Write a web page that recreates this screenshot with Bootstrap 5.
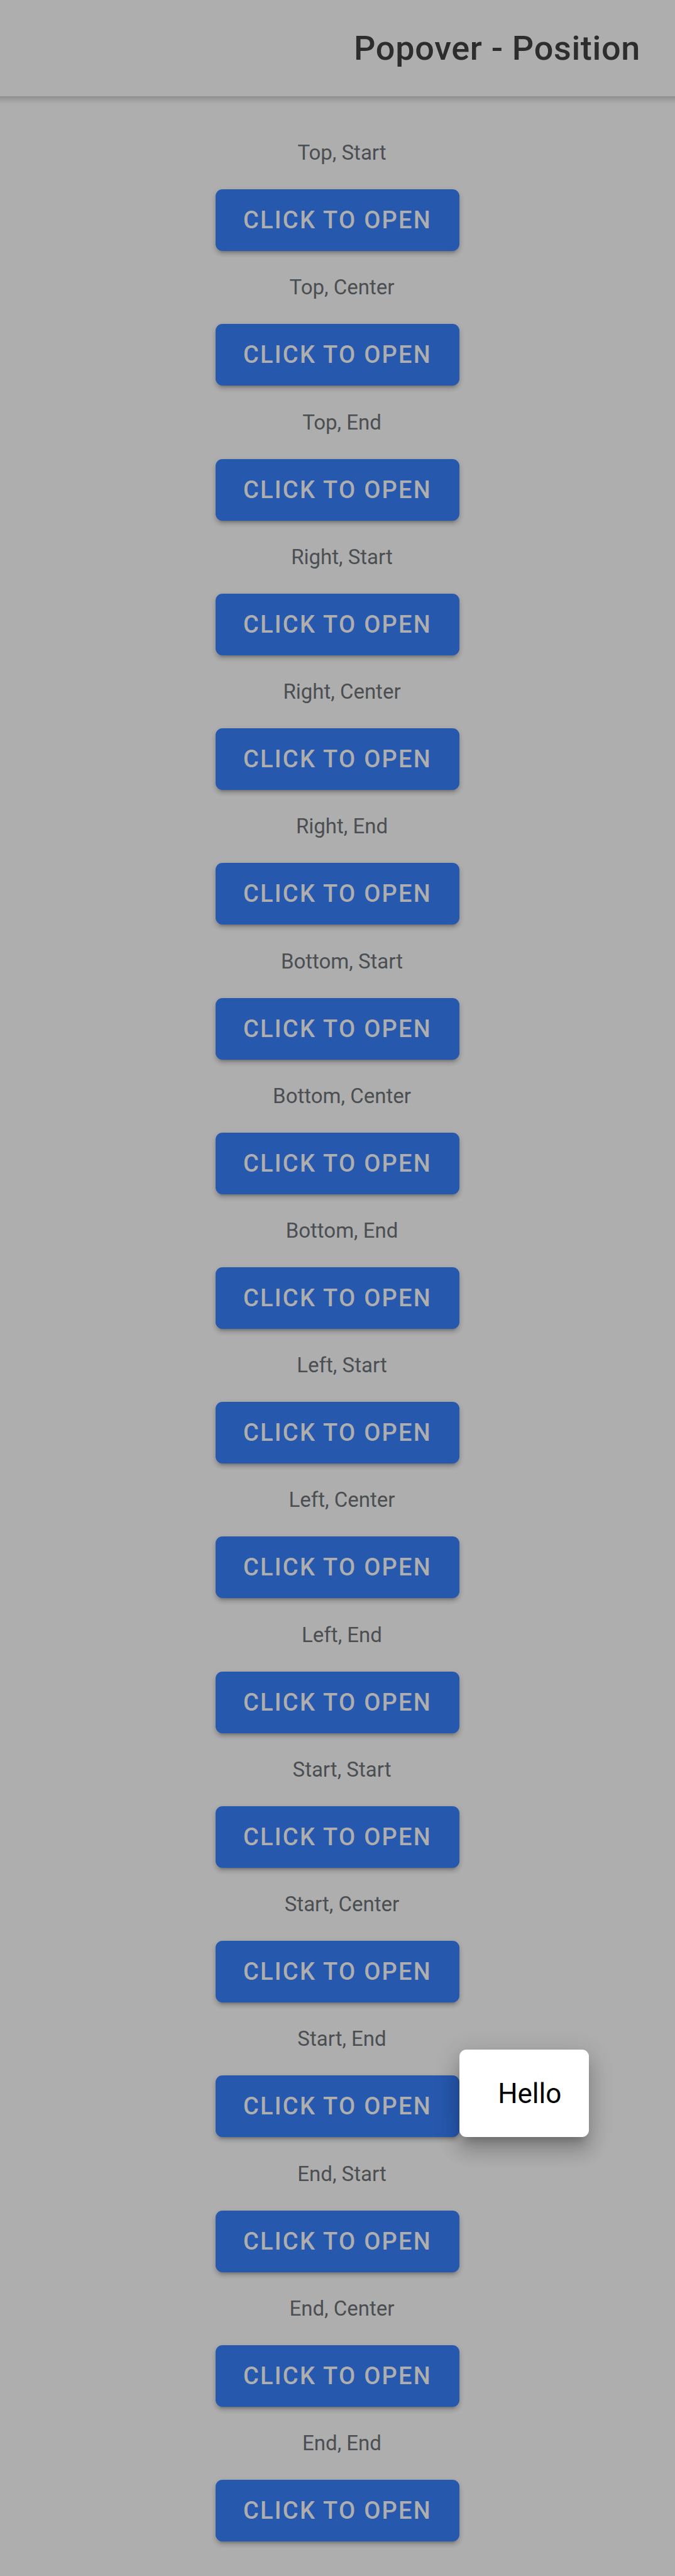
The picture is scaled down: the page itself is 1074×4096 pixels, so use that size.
<!DOCTYPE html>
<html lang="en">
<head>
<meta charset="utf-8">
<meta name="viewport" content="width=device-width, initial-scale=1">
<title>Popover - Position</title>
<link href="https://cdn.jsdelivr.net/npm/bootstrap@5.3.0/dist/css/bootstrap.min.css" rel="stylesheet">
<style>
  body { font-family: Roboto, "Liberation Sans", sans-serif; background: #aeaeae; }
  .app-header { height: 153px; padding: 0 55px; background: #aeaeae; }
  /* soft drop shadow under the toolbar */
  .app-header::after {
    content: ""; position: absolute; left: 0; right: 0; top: 100%; height: 16px;
    background: linear-gradient(rgba(0,0,0,.18), rgba(0,0,0,.09) 35%, rgba(0,0,0,.02) 70%, transparent);
  }
  .app-title { font-size: 54px; line-height: 64px; font-weight: 500; letter-spacing: .0125em; color: #2d2d2d; }
  .position-list { padding: 32px 0 55px; }
  .position-label { font-size: 33px; line-height: 40px; color: #4b4f52; padding-left: 14px; margin-bottom: 38px; }
  .btn-open {
    --bs-btn-color: #aeaeae; --bs-btn-bg: #2658ae;
    --bs-btn-hover-color: #aeaeae; --bs-btn-hover-bg: #2250a0;
    --bs-btn-font-size: 38px; --bs-btn-font-weight: 500; --bs-btn-line-height: 46px;
    --bs-btn-padding-x: 44px; --bs-btn-padding-y: 26px;
    --bs-btn-border-width: 0; --bs-btn-border-radius: 11px;
    letter-spacing: .06em;
    box-shadow: 0 8px 3px -6px rgba(0,0,0,.14), 0 5px 6px rgba(0,0,0,.14), 0 3px 10px rgba(0,0,0,.12);
  }
  .hello-popover {
    left: 100%; bottom: 0; padding: 45px 44px 44px 61px;
    font-size: 44px; line-height: 50px; color: #000; background: #fff; border-radius: 11px;
    box-shadow: 0 14px 14px -8px rgba(0,0,0,.2), 0 22px 28px 3px rgba(0,0,0,.14), 0 8px 38px 6px rgba(0,0,0,.12);
  }
</style>
</head>
<body class="d-flex flex-column min-vh-100">
  <header class="app-header position-relative d-flex align-items-center justify-content-end">
    <h1 class="app-title m-0">Popover - Position</h1>
  </header>
  <main class="position-list flex-grow-1 d-flex flex-column">
    <section class="flex-fill d-flex flex-column align-items-center justify-content-end"><div class="position-label" id="p1">Top, Start</div><button type="button" class="btn btn-open" aria-describedby="p1">CLICK TO OPEN</button></section>
    <section class="flex-fill d-flex flex-column align-items-center justify-content-end"><div class="position-label" id="p2">Top, Center</div><button type="button" class="btn btn-open" aria-describedby="p2">CLICK TO OPEN</button></section>
    <section class="flex-fill d-flex flex-column align-items-center justify-content-end"><div class="position-label" id="p3">Top, End</div><button type="button" class="btn btn-open" aria-describedby="p3">CLICK TO OPEN</button></section>
    <section class="flex-fill d-flex flex-column align-items-center justify-content-end"><div class="position-label" id="p4">Right, Start</div><button type="button" class="btn btn-open" aria-describedby="p4">CLICK TO OPEN</button></section>
    <section class="flex-fill d-flex flex-column align-items-center justify-content-end"><div class="position-label" id="p5">Right, Center</div><button type="button" class="btn btn-open" aria-describedby="p5">CLICK TO OPEN</button></section>
    <section class="flex-fill d-flex flex-column align-items-center justify-content-end"><div class="position-label" id="p6">Right, End</div><button type="button" class="btn btn-open" aria-describedby="p6">CLICK TO OPEN</button></section>
    <section class="flex-fill d-flex flex-column align-items-center justify-content-end"><div class="position-label" id="p7">Bottom, Start</div><button type="button" class="btn btn-open" aria-describedby="p7">CLICK TO OPEN</button></section>
    <section class="flex-fill d-flex flex-column align-items-center justify-content-end"><div class="position-label" id="p8">Bottom, Center</div><button type="button" class="btn btn-open" aria-describedby="p8">CLICK TO OPEN</button></section>
    <section class="flex-fill d-flex flex-column align-items-center justify-content-end"><div class="position-label" id="p9">Bottom, End</div><button type="button" class="btn btn-open" aria-describedby="p9">CLICK TO OPEN</button></section>
    <section class="flex-fill d-flex flex-column align-items-center justify-content-end"><div class="position-label" id="p10">Left, Start</div><button type="button" class="btn btn-open" aria-describedby="p10">CLICK TO OPEN</button></section>
    <section class="flex-fill d-flex flex-column align-items-center justify-content-end"><div class="position-label" id="p11">Left, Center</div><button type="button" class="btn btn-open" aria-describedby="p11">CLICK TO OPEN</button></section>
    <section class="flex-fill d-flex flex-column align-items-center justify-content-end"><div class="position-label" id="p12">Left, End</div><button type="button" class="btn btn-open" aria-describedby="p12">CLICK TO OPEN</button></section>
    <section class="flex-fill d-flex flex-column align-items-center justify-content-end"><div class="position-label" id="p13">Start, Start</div><button type="button" class="btn btn-open" aria-describedby="p13">CLICK TO OPEN</button></section>
    <section class="flex-fill d-flex flex-column align-items-center justify-content-end"><div class="position-label" id="p14">Start, Center</div><button type="button" class="btn btn-open" aria-describedby="p14">CLICK TO OPEN</button></section>
    <section class="flex-fill d-flex flex-column align-items-center justify-content-end"><div class="position-label" id="p15">Start, End</div>
      <div class="position-relative d-flex">
        <button type="button" class="btn btn-open" aria-describedby="p15" aria-expanded="true">CLICK TO OPEN</button>
        <div class="hello-popover position-absolute" role="dialog" aria-label="Hello">Hello</div>
      </div>
    </section>
    <section class="flex-fill d-flex flex-column align-items-center justify-content-end"><div class="position-label" id="p16">End, Start</div><button type="button" class="btn btn-open" aria-describedby="p16">CLICK TO OPEN</button></section>
    <section class="flex-fill d-flex flex-column align-items-center justify-content-end"><div class="position-label" id="p17">End, Center</div><button type="button" class="btn btn-open" aria-describedby="p17">CLICK TO OPEN</button></section>
    <section class="flex-fill d-flex flex-column align-items-center justify-content-end"><div class="position-label" id="p18">End, End</div><button type="button" class="btn btn-open" aria-describedby="p18">CLICK TO OPEN</button></section>
  </main>
  <script src="https://cdn.jsdelivr.net/npm/bootstrap@5.3.0/dist/js/bootstrap.bundle.min.js"></script>
</body>
</html>
